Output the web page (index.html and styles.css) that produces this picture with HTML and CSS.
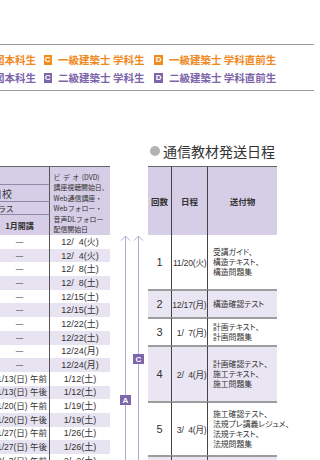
FILE: index.html
```html
<!DOCTYPE html>
<html lang="ja">
<head>
<meta charset="utf-8">
<title>通信教材発送日程</title>
<link rel="stylesheet" href="styles.css">
</head>
<body>
<div class="page">
  <div class="legend">
    <div class="legend-row orange">
      <span class="lg-item lg-cut">図本科生</span>
      <span class="lg-item"><span class="badge">C</span>一級建築士 学科生</span>
      <span class="lg-item"><span class="badge">D</span>一級建築士 学科直前生</span>
    </div>
    <div class="legend-row purple">
      <span class="lg-item lg-cut">図本科生</span>
      <span class="lg-item"><span class="badge">C</span>二級建築士 学科生</span>
      <span class="lg-item"><span class="badge">D</span>二級建築士 学科直前生</span>
    </div>
  </div>

  <div class="main">
    <h2 class="title"><span class="dot"></span>通信教材発送日程</h2>

    <table class="sched">
      <colgroup><col class="w1"><col class="w2"></colgroup>
      <thead>
        <tr class="h1"><th class="c1"></th><th class="c2 video" rowspan="4"><span class="vid">ビデオ</span>(DVD)<br>講座視聴開始日、<br>Web通信講座・<br>Webフォロー・<br>音声DLフォロー<br>配信開始日</th></tr>
        <tr class="h2"><th class="c1 school">日校</th></tr>
        <tr class="h3"><th class="c1 klass">クラス</th></tr>
        <tr class="h4"><th class="c1 month">1月開講</th></tr>
      </thead>
      <tbody>
        <tr><td class="c1 dash">—</td><td class="c2">12/&#8199;4(火)</td></tr>
        <tr><td class="c1 dash">—</td><td class="c2">12/&#8199;4(火)</td></tr>
        <tr><td class="c1 dash">—</td><td class="c2">12/&#8199;8(土)</td></tr>
        <tr><td class="c1 dash">—</td><td class="c2">12/&#8199;8(土)</td></tr>
        <tr><td class="c1 dash">—</td><td class="c2">12/15(土)</td></tr>
        <tr><td class="c1 dash">—</td><td class="c2">12/15(土)</td></tr>
        <tr><td class="c1 dash">—</td><td class="c2">12/22(土)</td></tr>
        <tr><td class="c1 dash">—</td><td class="c2">12/22(土)</td></tr>
        <tr><td class="c1 dash">—</td><td class="c2">12/24(月)</td></tr>
        <tr><td class="c1 dash">—</td><td class="c2">12/24(月)</td></tr>
        <tr><td class="c1">1/13(日) 午前</td><td class="c2">1/12(土)</td></tr>
        <tr><td class="c1">1/13(日) 午後</td><td class="c2">1/12(土)</td></tr>
        <tr><td class="c1">1/20(日) 午前</td><td class="c2">1/19(土)</td></tr>
        <tr><td class="c1">1/20(日) 午後</td><td class="c2">1/19(土)</td></tr>
        <tr><td class="c1">1/27(日) 午前</td><td class="c2">1/26(土)</td></tr>
        <tr><td class="c1">1/27(日) 午後</td><td class="c2">1/26(土)</td></tr>
        <tr><td class="c1">2/&#8199;3(日) 午前</td><td class="c2">2/&#8199;2(土)</td></tr>
      </tbody>
    </table>

    <div class="arrows">
      <svg width="38" height="320" viewBox="0 0 38 320" aria-hidden="true">
        <g stroke="#b4a9d3" stroke-width="1" fill="none">
          <path d="M15.5 70 V320 M11 74.5 L15.5 70 L20 74.5"/>
          <path d="M28.5 70 V320 M24 74.5 L28.5 70 L33 74.5"/>
        </g>
      </svg>
      <span class="abadge ab-c">C</span>
      <span class="abadge ab-a">A</span>
    </div>

    <table class="ship">
      <colgroup><col class="s1"><col class="s2"><col class="s3"></colgroup>
      <thead>
        <tr><th class="c1">回数</th><th class="c2">日程</th><th class="c3">送付物</th></tr>
      </thead>
      <tbody>
        <tr class="r1"><td class="c1 num">1</td><td class="c2 date">11/20(火)</td><td class="c3 items">受講ガイド、<br>構造テキスト、<br>構造問題集</td></tr>
        <tr class="r2 alt"><td class="c1 num">2</td><td class="c2 date">12/17(月)</td><td class="c3 items">構造確認テスト</td></tr>
        <tr class="r3"><td class="c1 num">3</td><td class="c2 date">1/&#8199;7(月)</td><td class="c3 items">計画テキスト、<br>計画問題集</td></tr>
        <tr class="r4 alt"><td class="c1 num">4</td><td class="c2 date">2/&#8199;4(月)</td><td class="c3 items">計画確認テスト、<br>施工テキスト、<br>施工問題集</td></tr>
        <tr class="r5"><td class="c1 num">5</td><td class="c2 date">3/&#8199;4(月)</td><td class="c3 items">施工確認テスト、<br>法規プレ講義レジュメ、<br>法規テキスト、<br>法規問題集</td></tr>
        <tr class="r6 alt"><td class="c1 num">6</td><td class="c2 date">4/&#8199;1(月)</td><td class="c3 items">法規確認テスト</td></tr>
      </tbody>
    </table>
  </div>
</div>
</body>
</html>
```

FILE: styles.css
```css
* { box-sizing: border-box; }
html, body { margin: 0; padding: 0; background: #fff; }
body {
  width: 320px;
  height: 460px;
  overflow: hidden;
  font-family: "Liberation Sans", "Noto Sans CJK JP", sans-serif;
  color: #333;
}
.page { padding-top: 44px; }

/* legend */
.legend {
  width: 314px;
  border-top: 1.5px solid #9d9d9d;
  border-bottom: 1.5px solid #9d9d9d;
  padding: 8.5px 0 6px;
  display: flex;
  flex-direction: column;
  gap: 6px;
  font-family: "Noto Sans CJK JP", sans-serif;
  font-weight: 700;
  font-size: 10.5px;
}
.legend-row {
  display: flex;
  align-items: center;
  gap: 10px;
  height: 12px;
  line-height: 12px;
  white-space: nowrap;
}
.lg-item { display: flex; align-items: center; gap: 6px; }
.lg-cut { margin-left: -6px; margin-right: -2.5px; }
.badge {
  width: 8.5px;
  height: 10px;
  display: inline-flex;
  align-items: center;
  justify-content: center;
  color: #fff;
  font-family: "Liberation Sans", sans-serif;
  font-size: 8px;
  font-weight: 700;
}
.orange { color: #ee8a1f; }
.orange .badge { background: #f08c1c; }
.purple { color: #7c65aa; }
.purple .badge { background: #7c65aa; }

/* main grid */
.main {
  display: grid;
  grid-template-columns: 120px 38px 129px;
  grid-template-rows: 18px auto;
  row-gap: 6px;
  margin: 51.5px 0 0 -10px;
}
.title {
  grid-column: 3;
  grid-row: 1;
  margin: 0;
  padding-left: 2px;
  display: flex;
  align-items: center;
  gap: 3px;
  font-family: "Noto Sans CJK JP", sans-serif;
  font-weight: 400;
  font-size: 14px;
  line-height: 18px;
  color: #333;
  white-space: nowrap;
}
.dot {
  width: 10px;
  height: 10px;
  border-radius: 50%;
  background: #b3b3b3;
}

/* left schedule table */
.sched {
  grid-column: 1;
  grid-row: 2;
  align-self: start;
  width: 120px;
  table-layout: fixed;
  border-collapse: separate;
  border-spacing: 0;
  font-size: 9px;
}
.sched col.w1 { width: 60px; }
.sched col.w2 { width: 60px; }
.sched th, .sched td { padding: 0; white-space: nowrap; overflow: hidden; }
.sched thead th {
  background: #d6cee6;
  font-weight: 400;
  font-family: "Noto Sans CJK JP", sans-serif;
  color: #333;
}
.sched .c1 { border-right: 1px solid #555; }
.sched tr.h1 th { border-top: 1px solid #666; }
.sched tr.h1 { height: 19px; }
.sched tr.h2 { height: 17px; }
.sched tr.h3 { height: 13px; }
.sched tr.h4 { height: 20px; }
.sched tr.h1 th.c1, .sched tr.h2 th.c1, .sched tr.h3 th.c1 { border-bottom: 1px solid #9089a6; }
.sched .school { text-align: right; padding-right: 37px; font-size: 10px; }
.sched .klass { text-align: right; padding-right: 36px; font-size: 8px; }
.sched .month { text-align: center; font-size: 8px; font-weight: 700; }
.sched .video {
  vertical-align: top;
  text-align: left;
  padding: 4.5px 0 0 3.5px;
  font-size: 6.9px;
  line-height: 10.5px;
}
.vid { letter-spacing: 2.5px; }
.sched tbody tr { height: 13.7px; }
.sched tbody tr:nth-child(even) td { background: #e8e3f1; }
.sched tbody td { text-align: center; line-height: 12px; color: #333; }
.sched tbody td.c1 { font-size: 8.5px; padding-left: 5px; }
.sched tbody td.dash { font-size: 7.5px; padding-left: 0; }

/* arrows */
.arrows { grid-column: 2; grid-row: 2; position: relative; }
.arrows svg { display: block; }
.abadge {
  position: absolute;
  width: 11px;
  height: 10px;
  background: #7c65aa;
  color: #fff;
  font-family: "Liberation Sans", sans-serif;
  font-size: 8px;
  font-weight: 700;
  display: flex;
  align-items: center;
  justify-content: center;
}
.ab-c { left: 23px; top: 188px; }
.ab-a { left: 10px; top: 229px; }

/* shipping table */
.ship {
  grid-column: 3;
  grid-row: 2;
  align-self: start;
  width: 129px;
  table-layout: fixed;
  border-collapse: separate;
  border-spacing: 0;
}
.ship col.s1 { width: 24px; }
.ship col.s2 { width: 36px; }
.ship col.s3 { width: 69px; }
.ship th, .ship td { padding: 0; }
.ship .c1, .ship .c2 { border-right: 1px solid #444; }
.ship thead tr { height: 69px; }
.ship thead th {
  background: #d6cee6;
  border-top: 1px solid #666;
  font-family: "Noto Sans CJK JP", sans-serif;
  font-size: 8.5px;
  font-weight: 700;
  color: #333;
  text-align: center;
  vertical-align: middle;
}
.ship tbody tr + tr td { border-top: 2px solid #9d9d9d; }
.ship tbody tr.alt td { background: #e9e5f2; }
.ship tr.r1 { height: 54px; }
.ship tr.r2 { height: 28px; }
.ship tr.r3 { height: 28px; }
.ship tr.r4 { height: 56px; }
.ship tr.r5 { height: 54px; }
.ship tr.r6 { height: 30px; }
.num { text-align: center; font-size: 11px; color: #333; }
.ship td.date {
  text-align: right;
  padding-right: 0.5px;
  font-size: 8.6px;
  white-space: nowrap;
  letter-spacing: -0.2px;
}
.ship td.items {
  padding-left: 5px;
  font-family: "Noto Sans CJK JP", sans-serif;
  font-size: 7.8px;
  line-height: 10px;
  font-feature-settings: "palt";
  white-space: nowrap;
}
```
